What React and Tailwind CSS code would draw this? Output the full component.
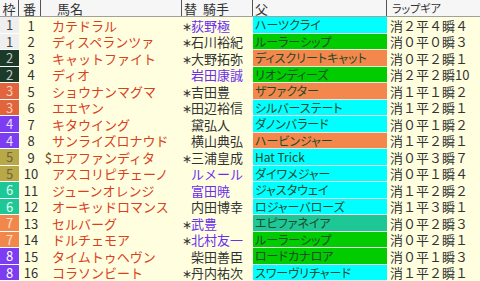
const font = { fontFamily: '"Noto Sans CJK JP", "Noto Sans", sans-serif' }

const frames = {
  1: 'bg-[#efefef] text-[#444]',
  2: 'bg-[#1c3a28] text-[#c8c8c8]',
  3: 'bg-[#e2643c] text-[#f8d0b8]',
  4: 'bg-[#7b3cf2] text-[#e4dcff]',
  5: 'bg-[#b8a848] text-[#6d6440]',
  6: 'bg-[#1ec896] text-[#e4fff2]',
  7: 'bg-[#f2874c] text-[#fde0cc]',
  8: 'bg-[#7b3cf2] text-white',
}

const sires = {
  cyan: 'bg-[#00ffff]',
  green: 'bg-[#00cc00]',
  orange: 'bg-[#f4874b]',
  teal: 'bg-[#1ec896]',
}

const rows = [
  { w: 1, n: 1, name: 'カテドラル', star: true, jockey: '荻野極', p: true, sire: 'ハーツクライ', c: 'cyan', gear: '消２平４瞬４' },
  { w: 1, n: 2, name: 'ディスペランツァ', star: true, jockey: '石川裕紀', sire: 'ルーラーシップ', c: 'green', gear: '消０平０瞬３' },
  { w: 2, n: 3, name: 'キャットファイト', star: true, jockey: '大野拓弥', sire: 'ディスクリートキャット', c: 'orange', gear: '消０平２瞬１' },
  { w: 2, n: 4, name: 'ディオ', jockey: '岩田康誠', p: true, sire: 'リオンディーズ', c: 'green', gear: '消２平２瞬10' },
  { w: 3, n: 5, name: 'ショウナンマグマ', star: true, jockey: '吉田豊', sire: 'ザファクター', c: 'orange', gear: '消１平１瞬２' },
  { w: 3, n: 6, name: 'エエヤン', star: true, jockey: '田辺裕信', sire: 'シルバーステート', c: 'cyan', gear: '消１平２瞬１' },
  { w: 4, n: 7, name: 'キタウイング', jockey: '黛弘人', sire: 'ダノンバラード', c: 'cyan', gear: '消０平１瞬２' },
  { w: 4, n: 8, name: 'サンライズロナウド', jockey: '横山典弘', sire: 'ハービンジャー', c: 'orange', gear: '消１平２瞬１' },
  { w: 5, n: 9, mark: '$', name: 'エアファンディタ', star: true, jockey: '三浦皇成', sire: 'Hat Trick', c: 'cyan', gear: '消０平３瞬７' },
  { w: 5, n: 10, name: 'アスコリピチェーノ', jockey: 'ルメール', p: true, sire: 'ダイワメジャー', c: 'cyan', gear: '消０平１瞬４' },
  { w: 6, n: 11, name: 'ジューンオレンジ', jockey: '富田暁', p: true, sire: 'ジャスタウェイ', c: 'cyan', gear: '消１平２瞬２' },
  { w: 6, n: 12, name: 'オーキッドロマンス', jockey: '内田博幸', sire: 'ロジャーバローズ', c: 'cyan', gear: '消１平３瞬１' },
  { w: 7, n: 13, name: 'セルバーグ', star: true, jockey: '武豊', p: true, sire: 'エピファネイア', c: 'teal', gear: '消０平２瞬３' },
  { w: 7, n: 14, name: 'ドルチェモア', star: true, jockey: '北村友一', p: true, sire: 'ルーラーシップ', c: 'green', gear: '消０平２瞬１' },
  { w: 8, n: 15, name: 'タイムトゥヘヴン', jockey: '柴田善臣', sire: 'ロードカナロア', c: 'green', gear: '消０平１瞬３' },
  { w: 8, n: 16, name: 'コラソンビート', star: true, jockey: '丹内祐次', sire: 'スワーヴリチャード', c: 'cyan', gear: '消１平２瞬１' },
]

const cols = 'grid grid-cols-[19px_22px_141px_71px_134px_1fr]'

function Row({ r }) {
  return (
    <div className={`${cols} h-[16.5px] text-[13px] leading-[15px]`}>
      <div className={`flex items-center justify-center border-b border-white ${frames[r.w]}`}>{r.w}</div>
      <div className="flex items-center justify-center pl-[2px] text-[#333]">{r.n}</div>
      <div className="flex items-center">
        <span className="w-[11px] text-right text-[#7a4a20]">{r.mark}</span>
        <span className="text-[#d9401c]">{r.name}</span>
      </div>
      <div className="flex items-center">
        <span className="w-[9px] text-center text-[12px] text-[#333]">{r.star ? '∗' : ''}</span>
        <span className={r.p ? 'text-[#6b2ff0]' : 'text-[#333]'}>{r.jockey}</span>
      </div>
      <div
        className={`flex items-center overflow-hidden whitespace-nowrap border-b border-[#e6e6e6] pl-[2px] text-[12px] text-[#1f4a2c] [font-feature-settings:'palt'] ${sires[r.c]}`}
      >
        {r.sire}
      </div>
      <div className="flex items-center pl-[3px] text-[#333]">{r.gear}</div>
    </div>
  )
}

export default function App() {
  return (
    <div className="h-[281px] w-[480px] overflow-hidden bg-[#ffffe0]" style={font}>
      {/* Header */}
      <div className={`${cols} h-[17px] border-b border-[#a0a0a0] bg-[#f6f6f6] text-[13px] leading-[15px] text-[#333]`}>
        <div className="flex items-center justify-center border-r border-[#555]">枠</div>
        <div className="flex items-center justify-center border-r border-[#555]">番</div>
        <div className="flex items-center border-r border-[#555] pl-[16px]">馬名</div>
        <div className="flex items-center border-r border-[#555] pl-[2px]">
          替<span className="ml-[6px]">騎手</span>
        </div>
        <div className="flex items-center border-r border-[#555] pl-[2px]">父</div>
        <div className="flex items-center pl-[5px] text-[11px] [font-feature-settings:'palt']">ラップギア</div>
      </div>
      {rows.map((r) => (
        <Row key={r.n} r={r} />
      ))}
    </div>
  )
}
